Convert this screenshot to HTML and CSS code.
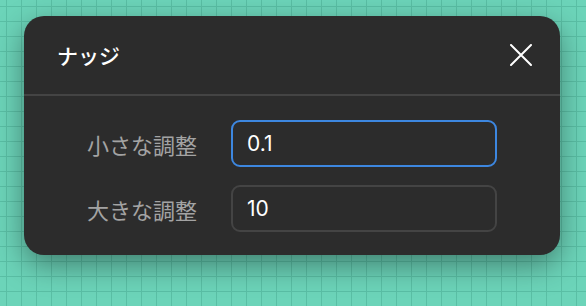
FILE: index.html
```html
<!DOCTYPE html>
<html lang="ja">
<head>
    <meta charset="UTF-8">
    <meta name="viewport" content="width=device-width, initial-scale=1.0">
    <title>ナッジ</title>
    <link rel="stylesheet" href="styles.css">
</head>
<body>
    <div class="dialog">
        <div class="dialog-header">
            <div class="dialog-title">ナッジ</div>
            <button class="close-btn" aria-label="閉じる">
                <svg width="22" height="22" viewBox="0 0 22 22">
                    <path d="M1 1 L21 21 M21 1 L1 21" stroke="#ffffff" stroke-width="2" stroke-linecap="round"/>
                </svg>
            </button>
        </div>
        <div class="dialog-body">
            <label class="field-label" for="small">小さな調整</label>
            <input class="field-input focused" id="small" type="text" value="0.1">
            <label class="field-label" for="large">大きな調整</label>
            <input class="field-input" id="large" type="text" value="10">
        </div>
    </div>
</body>
</html>
```

FILE: styles.css
```css
body {
    margin: 0;
    height: 306px;
    overflow: hidden;
    font-family: 'Inter', 'Noto Sans CJK JP', sans-serif;
    background-color: #6cd4b9;
    background-image:
        linear-gradient(to right, #5abfa5 1px, transparent 1px),
        linear-gradient(to bottom, #5abfa5 1px, transparent 1px);
    background-size: 15px 15px;
    background-position: 6px 6px;
}
.dialog {
    width: 536px;
    margin: 16px 0 0 24px;
    background: #2c2c2c;
    border-radius: 20px;
    box-shadow: 0 10px 30px rgba(0, 0, 0, 0.4);
    color: #ffffff;
}
.dialog-header {
    height: 78px;
    display: flex;
    align-items: center;
    justify-content: space-between;
    padding: 0 28px 0 33px;
    border-bottom: 2px solid #444444;
}
.dialog-title {
    font-size: 21px;
    font-weight: 500;
}
.close-btn {
    background: none;
    border: none;
    padding: 0;
    width: 22px;
    height: 22px;
    cursor: pointer;
}
.close-btn svg {
    display: block;
}
.dialog-body {
    display: grid;
    grid-template-columns: 1fr 266px;
    column-gap: 34px;
    row-gap: 18px;
    align-items: center;
    padding: 24px 63px 23px 24px;
}
.field-label {
    text-align: right;
    font-size: 22px;
    color: #a3a3a3;
}
.field-input {
    box-sizing: border-box;
    width: 100%;
    height: 47px;
    padding: 0 14px;
    background: #2c2c2c;
    border: 2px solid #444444;
    border-radius: 9px;
    color: #ffffff;
    font-family: inherit;
    font-size: 21px;
    outline: none;
}
.field-input.focused {
    border-color: #3d87e0;
}
```
